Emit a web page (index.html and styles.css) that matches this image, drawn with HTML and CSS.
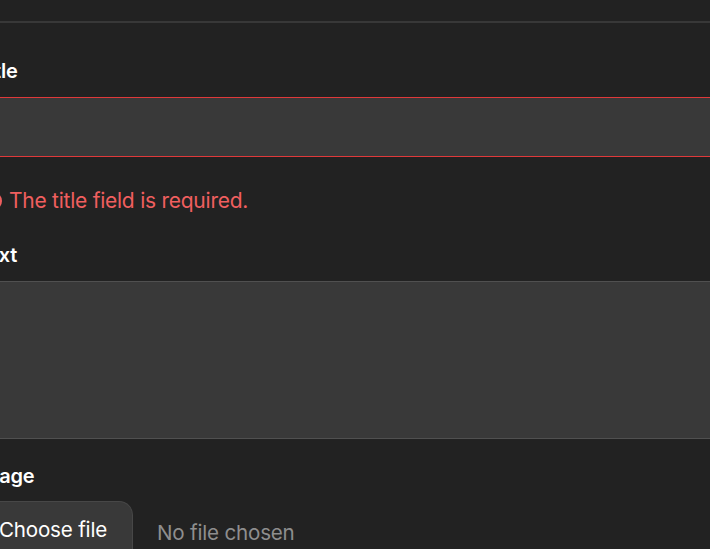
FILE: index.html
```html
<!DOCTYPE html>
<html lang="en">
<head>
<meta charset="utf-8">
<title>Form</title>
<link rel="stylesheet" href="styles.css">
</head>
<body>
<div class="page">
  <div class="topbar"></div>
  <form class="form">
    <div class="field">
      <label class="label" for="title">Title</label>
      <input class="input input-error" id="title" type="text">
      <p class="error">
        <svg class="err-icon" viewBox="0 0 20 20" width="20" height="20" aria-hidden="true"><circle cx="10" cy="10" r="8" fill="none" stroke="#f05f5f" stroke-width="2"/><path d="M10 6v5M10 13.5v.5" stroke="#f05f5f" stroke-width="2" stroke-linecap="round"/></svg>
        <span>The title field is required.</span>
      </p>
    </div>
    <div class="field">
      <label class="label label-text" for="text">Text</label>
      <textarea class="input textarea" id="text"></textarea>
    </div>
    <div class="field">
      <label class="label label-image" for="image">Image</label>
      <div class="file">
        <span class="file-btn">Choose file</span>
        <span class="file-name">No file chosen</span>
      </div>
    </div>
  </form>
</div>
</body>
</html>
```

FILE: styles.css
```css
html, body {
  margin: 0;
  padding: 0;
  background: #222222;
  height: 100%;
  overflow: hidden;
}
body {
  font-family: Inter, "Noto Sans", sans-serif;
  color: #ffffff;
}
.page {
  margin-left: -40px;
}
.topbar {
  height: 21px;
  border-bottom: 2px solid #383838;
}
.form {
  display: flex;
  flex-direction: column;
}
.field {
  display: flex;
  flex-direction: column;
}
.label {
  display: block;
  font-weight: 600;
  font-size: 20px;
  line-height: 24px;
  margin-top: 36px;
  margin-bottom: 14px;
  margin-left: 16px;
  letter-spacing: -0.2px;
}
.label-text {
  margin-top: 29px;
}
.label-image {
  margin-top: 25px;
  margin-bottom: 13px;
}
.input {
  display: block;
  box-sizing: border-box;
  width: 800px;
  background: #393939;
  border: none;
  border-top: 1px solid #505050;
  border-bottom: 1px solid #505050;
  margin: 0;
  padding: 0;
  font: inherit;
  color: #fff;
}
.input-error {
  height: 60px;
  border-top-color: #e0393a;
  border-bottom-color: #e0393a;
}
.error {
  margin: 0;
  padding-top: 31px;
  display: flex;
  align-items: center;
  gap: 6px;
  color: #f05f5f;
  font-size: 21px;
  line-height: 26px;
  margin-left: 23px;
  letter-spacing: -0.25px;
}
.err-icon {
  flex: none;
}
.textarea {
  height: 158px;
  resize: none;
}
.file {
  display: flex;
  align-items: center;
  gap: 24px;
}
.file-btn {
  display: block;
  background: #393939;
  border: 1px solid #474747;
  border-left: none;
  border-radius: 0 14px 0 0;
  padding: 16px 25px 20px 39px;
  font-size: 20.6px;
  line-height: 24px;
  color: #fff;
  letter-spacing: -0.2px;
}
.file-name {
  color: #8e8e8e;
  font-size: 20.6px;
  line-height: 24px;
  letter-spacing: -0.2px;
  padding-top: 2px;
}
```
